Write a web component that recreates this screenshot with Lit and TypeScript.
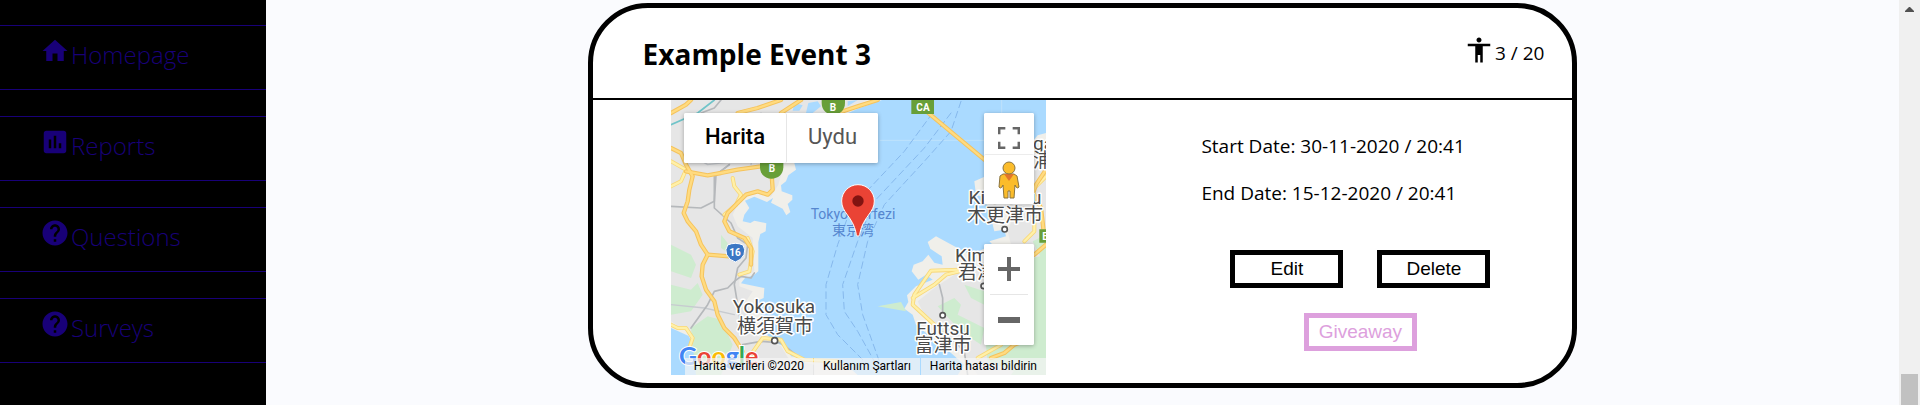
import { LitElement, html, svg, css } from "lit";
import { customElement } from "lit/decorators.js";

const ICONS = {
  home: "M10 20v-6h4v6h5v-8h3L12 3 2 12h3v8z",
  reports:
    "M19 3H5c-1.1 0-2 .9-2 2v14c0 1.1.9 2 2 2h14c1.1 0 2-.9 2-2V5c0-1.1-.9-2-2-2zM9 17H7v-7h2v7zm4 0h-2V7h2v10zm4 0h-2v-4h2v4z",
  help:
    "M12 2C6.48 2 2 6.48 2 12s4.48 10 10 10 10-4.48 10-10S17.52 2 12 2zm1 17h-2v-2h2v2zm2.07-7.75l-.9.92C13.45 12.9 13 13.5 13 15h-2v-.5c0-1.1.45-2.1 1.17-2.83l1.24-1.26c.37-.36.59-.86.59-1.41 0-1.1-.9-2-2-2s-2 .9-2 2H8c0-2.21 1.79-4 4-4s4 1.79 4 4c0 .88-.36 1.68-.93 2.25z",
  person:
    "M12 2c1.1 0 2 .9 2 2s-.9 2-2 2-2-.9-2-2 .9-2 2-2zm9 7h-6v13h-2v-6h-2v6H9V9H3V7h18v2z",
};

const icon = (path: string) => html`
  <svg class="icon" viewBox="0 0 24 24" aria-hidden="true"><path d=${path}></path></svg>
`;

const NAV = [
  { label: "Homepage", path: ICONS.home },
  { label: "Reports", path: ICONS.reports },
  { label: "Questions", path: ICONS.help },
  { label: "Surveys", path: ICONS.help },
];

const MOTORWAYS = [
  "M0 45 L45 20 L60 6",
  "M0 150 L30 165 L45 200 L65 235 L55 275 L50 310 L38 345 L50 370 L75 400 L90 440 L110 470 L95 500 L92 535 L105 575 L130 610 L140 650 L160 690 L190 720 L215 760",
  "M110 470 L175 475",
  "M45 220 L110 232 L150 225 L200 215 L270 205",
  "M302 230 L305 275 L290 290 L260 280 L225 290 L190 325 L170 345 L160 370 L175 400 L220 420 L240 450 L240 500",
  "M200 45 L260 30 L330 6",
  "M330 45 L390 6",
  "M500 45 L560 25 L620 6",
  "M760 35 L850 110 L940 185",
  "M1125 215 L1095 260 L1085 290 M1090 290 L1110 330 L1118 400",
  "M960 780 L1000 765 L1030 740 L1070 725",
  "M1090 470 L1125 440",
];

const ROADS = [
  "M0 265 L30 250 L45 215 L0 190",
  "M0 680 L20 690 L45 690 L65 720 L55 750",
  "M185 240 L190 265 L210 290 L195 320 L160 350",
  "M230 420 L245 460 L235 520 L205 530",
  "M240 770 L275 720 L330 725 L350 760 L400 785 L500 790",
  "M865 515 L780 518 L730 590 L725 620 L790 680",
  "M725 600 L790 560 L825 530 L865 520",
  "M790 680 L830 730",
  "M1125 235 L1095 265",
  "M920 780 L990 740",
  "M1060 430 L1090 400 L1090 360",
];

const RAILS = [
  "M0 325 L90 330 L130 310 L135 230 L175 200",
  "M90 45 L130 30 L150 6",
  "M175 200 L130 235 L130 330 L180 375 L200 420 L230 440 L225 480 L200 510 L190 560 L205 650 L210 690",
  "M60 690 L110 620 L130 580 L170 570 L190 550 L210 535 L240 540 L250 525",
  "M215 740 L270 730 L330 735 L400 790",
  "M815 655 L815 600 L805 560 M820 700 L880 760 L890 831",
];

const THIN = ["M60 170 L110 200 L190 190", "M0 620 L100 630 L190 650", "M270 45 L240 200"];

const FERRIES = [
  "M785 45 L700 160 L540 330 L500 440 L465 560 L465 650 L500 710 L590 800",
  "M840 45 L760 150 L610 310 L560 430 L515 560 L520 640 L560 700 L610 790",
  "M870 10 L840 100 L760 190 L640 320 L590 430 L560 560 L575 650 L625 790",
];

const GREENS = [
  "M0 440 L60 470 L75 500 L60 540 L0 520z",
  "M0 560 L60 575 L80 555 L95 590 L60 640 L0 650z",
  "M150 410 L170 435 L165 460 L150 450z",
  "M60 690 L110 655 L150 665 L185 740 L150 831 L75 831 L65 740z",
  "M800 625 L850 600 L870 620 L860 650 L940 690 L930 740 L870 700z",
  "M880 560 L940 580 L940 620 L900 600z",
  "M940 700 L1125 600 L1125 740 L1060 831 L950 790z",
  "M1085 480 L1125 470 L1125 831 L1020 831 L1085 740z",
  "M620 625 L690 612 L705 640z",
  "M1085 430 L1105 420 L1125 440 L1125 510z",
];

@customElement("event-map")
class EventMap extends LitElement {
  static styles = css`
    :host {
      display: block;
      position: relative;
      width: 375px;
      font-family: Roboto, "Noto Sans CJK JP", sans-serif;
      overflow: hidden;
    }
    button {
      font: inherit;
      border: 0;
      margin: 0;
      background: #fff;
      cursor: pointer;
    }
    svg {
      display: block;
    }
    .canvas {
      width: 100%;
      height: auto;
    }
    .line {
      fill: none;
      stroke-linejoin: round;
      stroke-linecap: round;
    }
    .case {
      stroke: #f5c35c;
      stroke-width: 13;
    }
    .motorway {
      stroke: #ffdb80;
      stroke-width: 7;
    }
    .road-case {
      stroke: #f8d778;
      stroke-width: 12;
    }
    .road {
      stroke: #fff0a8;
      stroke-width: 7;
    }
    .rail {
      stroke: #b5b8bb;
      stroke-width: 5;
    }
    .thin {
      stroke: #c7cbd0;
      stroke-width: 4;
    }
    .ferry {
      stroke: #86b8ec;
      stroke-width: 3;
      stroke-dasharray: 20 12;
    }
    .place {
      fill: #4a4a4a;
      stroke: #fff;
      stroke-width: 3px;
      stroke-linejoin: round;
      paint-order: stroke;
      font-size: 19px;
    }
    .bay {
      fill: #5586cf;
      font-size: 14px;
    }
    .mid {
      text-anchor: middle;
    }
    .dot {
      fill: #fff;
      stroke: #555;
      stroke-width: 5;
    }
    .badge {
      fill: #fff;
      font-size: 10px;
      font-weight: 700;
      text-anchor: middle;
    }
    .brand {
      font-family: Lato, sans-serif;
      font-size: 25px;
      font-weight: 700;
      stroke: #fff;
      stroke-width: 2px;
      paint-order: stroke;
    }
    .types {
      position: absolute;
      top: 13px;
      left: 13px;
      display: flex;
      height: 50px;
      background: #fff;
      border-radius: 2px;
      box-shadow: 0 1px 4px rgba(0, 0, 0, 0.3);
      font-size: 22px;
      line-height: 24px;
    }
    .type {
      padding: 0 21px 2px;
      color: #565656;
      border-radius: 2px;
    }
    .active {
      color: #000;
      font-weight: 500;
      border-right: 1px solid #e6e6e6;
    }
    .tools,
    .zoom {
      position: absolute;
      right: 12px;
      display: grid;
      width: 50px;
      background: #fff;
      border-radius: 2px;
      box-shadow: 0 1px 4px rgba(0, 0, 0, 0.3);
    }
    .tools {
      top: 13px;
      grid-template-rows: 41px 50px;
    }
    .zoom {
      bottom: 30px;
      grid-template-rows: 50px 1px 50px;
    }
    .tool {
      display: grid;
      place-items: center;
      padding: 0;
      border-radius: 2px;
    }
    .upper {
      padding-top: 8px;
    }
    .pegman {
      border-top: 1px solid #ececec;
    }
    .rule {
      margin: 0 6px;
      background: #e6e6e6;
    }
    .credits {
      position: absolute;
      right: 0;
      bottom: 0;
      display: flex;
      gap: 1px;
      font-size: 12px;
      line-height: 17px;
      white-space: nowrap;
    }
    .credit {
      padding: 0 9px;
      color: #000;
      background: rgba(245, 245, 245, 0.7);
      text-decoration: none;
    }
  `;

  private lines(paths: string[], kind: string) {
    return paths.map((d) => svg`<path class="line ${kind}" d=${d}></path>`);
  }

  render() {
    return html`
      <svg class="canvas" viewBox="0 0 375 275" role="img" aria-label="Tokyo Körfezi">
        <rect width="375" height="275" fill="#aadaff"></rect>
        <g transform="translate(0 -2) scale(.33333)">
          <path
            fill="#f0efea"
            d="M0 0H650L560 32L520 50L370 195L375 215L352 232L345 250L330 262L332 280L364 292L364 305L350 318L358 342L346 352L335 332L300 314L306 300L288 312L250 296L222 308L235 330L220 350L215 370L238 375L250 368L286 376L284 400L268 408L262 432L262 520L248 532L222 540L210 556L280 570L278 600L256 610L270 640L275 700L318 736L350 750L360 775L430 785L520 795L560 831H80L72 765L55 715L0 690z"
          ></path>
          <path
            fill="#e6e6e6"
            d="M0 0H600L500 50L340 195L322 260L300 296L250 284L205 310L185 350L200 385L245 420L250 520L205 545L205 565L245 580L225 610L245 660L262 715L330 745L355 785L430 800V831H90L72 750L45 700L0 670z"
          ></path>
          <path
            fill="#f0efea"
            d="M1125 105L1100 112L1085 130L1050 170L1000 210L910 250L915 290L945 300L970 400L1000 395L1005 415L955 430L965 440L900 470L850 445L795 415L770 432L778 452L812 475L815 500L790 494L772 470L755 490L728 500L722 520L742 545L765 530L785 545L735 565L708 592L712 612L700 632L725 650L735 680L765 705L840 765L880 800L860 831H1125z"
          ></path>
          <path
            fill="#e6e6e6"
            d="M1125 160L1085 210L1010 400L1020 440L940 490L850 530L790 570L740 610L760 650L880 770L920 831H1125z"
          ></path>
          ${GREENS.map((d) => svg`<path fill="#ceeccf" d=${d}></path>`)}
          <path fill="#aadaff" d="M405 45L412 15L440 10L450 25L425 45z M530 10L560 6L530 25z M370 15L395 22L385 38L365 38z"></path>
          <path class="line" stroke="#70c4c9" stroke-width="5" d="M0 80L80 45L130 6"></path>
          <path class="line" stroke="#bfe2fc" stroke-width="3" d="M627 127H940M992 6V45"></path>
          ${this.lines(FERRIES, "ferry")} ${this.lines(THIN, "thin")}
          ${this.lines(RAILS, "rail")} ${this.lines(ROADS, "road-case")}
          ${this.lines(ROADS, "road")} ${this.lines(MOTORWAYS, "case")}
          ${this.lines(MOTORWAYS, "motorway")}
          <path fill="#689f38" d="M452 0H522V15C522 38 505 50 487 50S452 38 452 15z"></path>
          <path fill="#689f38" d="M267 180H337V208C337 230 320 242 302 242S267 230 267 208z"></path>
          <path fill="#689f38" d="M721 0H789V48H721zM1105 394H1125V434H1105z"></path>
          <path
            fill="#3b77c4"
            stroke="#fff"
            stroke-width="3"
            d="M170 441Q193 431 216 441Q225 455 219 470Q211 487 193 492Q175 487 167 470Q161 455 170 441z"
          ></path>
          <circle class="dot" cx="311" cy="728" r="9"></circle>
          <circle class="dot" cx="815" cy="652" r="8"></circle>
          <circle class="dot" cx="1001" cy="394" r="8"></circle>
          <circle class="dot" cx="938" cy="564" r="8"></circle>
        </g>
        <text class="badge" x="162" y="11">B</text>
        <text class="badge" x="101" y="72">B</text>
        <text class="badge" x="252" y="11">CA</text>
        <text class="badge" x="374" y="140">E</text>
        <text class="badge" x="64" y="156">16</text>
        <text class="bay mid" x="182" y="119">Tokyo Körfezi</text>
        <text class="bay mid" x="182" y="135">東京湾</text>
        <text class="place mid" x="103" y="213">Yokosuka</text>
        <text class="place mid" x="104" y="233">横須賀市</text>
        <text class="place mid" x="272" y="235">Futtsu</text>
        <text class="place mid" x="272" y="252">富津市</text>
        <text class="place mid" x="334" y="104">Kisarazu</text>
        <text class="place mid" x="334" y="122">木更津市</text>
        <text class="place" x="284" y="162">Kimitsu</text>
        <text class="place" x="287" y="179">君津市</text>
        <text class="place" x="362" y="50">ga</text>
        <text class="place" x="362" y="67">浦</text>
        <g transform="translate(0 -2) scale(.33333)">
          <path
            fill="#ea4335"
            stroke="#fff"
            stroke-width="3"
            d="M561 260C534 260 512 282 512 309C512 326 519 337 530 352C545 372 553 390 556 410Q561 420 566 410C569 390 577 372 592 352C603 337 610 326 610 309C610 282 588 260 561 260z"
          ></path>
          <circle cx="561" cy="309" r="17" fill="#811411"></circle>
        </g>
        <text class="brand" x="8" y="265"><tspan fill="#4285f4">G</tspan><tspan fill="#ea4335">o</tspan><tspan fill="#fbbc05">o</tspan><tspan fill="#4285f4">g</tspan><tspan fill="#34a853">l</tspan><tspan fill="#ea4335">e</tspan></text>
      </svg>
      <div class="types">
        <button class="type active">Harita</button>
        <button class="type">Uydu</button>
      </div>
      <div class="tools">
        <button class="tool upper" aria-label="Tam ekran">
          <svg width="22" height="22" viewBox="0 0 18 18" fill="#666">
            <path d="M0 0v6h2V2h4V0H0zm16 0h-4v2h4v4h2V0h-2zm0 16h-4v2h6v-6h-2v4zM2 12H0v6h6v-2H2v-4z"></path>
          </svg>
        </button>
        <button class="tool pegman" aria-label="Street View">
          <svg width="22" height="38" viewBox="0 0 22 38">
            <path
              fill="#fbbc2b"
              stroke="#8a7440"
              d="M5 13L2 15L1 26Q2 28 4 26L5 24L6 37H10V30H12V37H16L17 24L18 26Q20 28 21 26L19 15L16 13z"
            ></path>
            <path fill="#e2752b" d="M6 13H16L11 20z"></path>
            <circle cx="11" cy="7" r="6" fill="#fbbc2b" stroke="#8a7440"></circle>
          </svg>
        </button>
      </div>
      <div class="zoom">
        <button class="tool" aria-label="Yakınlaştır">
          <svg width="22" height="24" viewBox="0 0 22 24" fill="#666">
            <path d="M9 0H13V10H22V14H13V24H9V14H0V10H9z"></path>
          </svg>
        </button>
        <span class="rule"></span>
        <button class="tool" aria-label="Uzaklaştır">
          <svg width="22" height="6" viewBox="0 0 22 6" fill="#666"><path d="M0 0H22V6H0z"></path></svg>
        </button>
      </div>
      <div class="credits">
        <span class="credit">Harita verileri ©2020</span>
        <a class="credit" href="#terms">Kullanım Şartları</a>
        <a class="credit" href="#report">Harita hatası bildirin</a>
      </div>
    `;
  }
}

@customElement("app-root")
class AppRoot extends LitElement {
  static styles = css`
    :host {
      display: flex;
      min-height: 100vh;
      background: #fafbfe;
      color: #000;
      font-family: "Segoe UI", "Open Sans", "Noto Sans", sans-serif;
    }
    .sidebar {
      display: flex;
      flex-direction: column;
      gap: 26px;
      flex: 0 0 266px;
      box-sizing: border-box;
      padding-top: 25px;
      background: #000;
    }
    .link {
      display: flex;
      gap: 1px;
      height: 63px;
      padding-left: 40px;
      border-top: 1px solid #180078;
      border-bottom: 1px solid #180078;
      color: #180078;
      font-size: 24px;
      font-weight: 300;
      line-height: 58px;
      text-decoration: none;
    }
    .icon {
      width: 30px;
      height: 30px;
      fill: currentColor;
    }
    .link .icon {
      margin-top: 10px;
    }
    .content {
      flex: 1;
      padding-top: 3px;
    }
    .card {
      width: 60%;
      margin: 0 auto;
      padding-bottom: 8px;
      border: 5px solid #000;
      border-radius: 60px;
      background: #fff;
    }
    .head {
      display: flex;
      justify-content: space-between;
      align-items: center;
      height: 90px;
      padding: 0 28px 0 50px;
      border-bottom: 2px solid #000;
    }
    .title {
      margin: 0;
      padding-top: 2px;
      font-size: 28px;
      font-weight: 700;
    }
    .count {
      display: flex;
      align-items: flex-start;
      gap: 1px;
      font-size: 19px;
      line-height: 36px;
    }
    .body {
      display: flex;
      justify-content: space-between;
      padding: 0 53px 0 8%;
    }
    .details {
      flex: 0 0 318px;
      padding-top: 32px;
    }
    .date {
      margin: 0 0 19px;
      font-size: 19px;
      line-height: 28px;
    }
    .actions {
      display: flex;
      flex-wrap: wrap;
      justify-content: center;
      gap: 25px 34px;
      padding-top: 24px;
    }
    .action {
      width: 113px;
      height: 38px;
      padding: 0;
      border: 5px solid #000;
      background: #fff;
      color: #000;
      font-family: "Liberation Sans", Arial, sans-serif;
      font-size: 19px;
      cursor: pointer;
    }
    .giveaway {
      border-color: #dda0dd;
      color: #dda0dd;
    }
    .scrollbar {
      display: flex;
      flex-direction: column;
      justify-content: space-between;
      align-items: center;
      flex: 0 0 21px;
      background: #f0f0f0;
    }
    .arrow {
      margin-top: 7px;
      fill: #505050;
    }
    .thumb {
      width: 17px;
      height: 31px;
      background: #c1c1c1;
    }
  `;

  render() {
    return html`
      <nav class="sidebar">
        ${NAV.map(
          (item) => html`<a class="link" href="#${item.label.toLowerCase()}">${icon(item.path)}<span>${item.label}</span></a>`
        )}
      </nav>
      <main class="content">
        <article class="card">
          <header class="head">
            <h2 class="title">Example Event 3</h2>
            <span class="count">${icon(ICONS.person)}<span>3 / 20</span></span>
          </header>
          <div class="body">
            <event-map></event-map>
            <section class="details">
              <p class="date">Start Date: 30-11-2020 / 20:41</p>
              <p class="date">End Date: 15-12-2020 / 20:41</p>
              <div class="actions">
                <button class="action">Edit</button>
                <button class="action">Delete</button>
                <button class="action giveaway">Giveaway</button>
              </div>
            </section>
          </div>
        </article>
      </main>
      <div class="scrollbar" aria-hidden="true">
        <svg class="arrow" width="9" height="5" viewBox="0 0 9 5"><path d="M4 0h1l4 4v1H0V4z"></path></svg>
        <span class="thumb"></span>
      </div>
    `;
  }
}
